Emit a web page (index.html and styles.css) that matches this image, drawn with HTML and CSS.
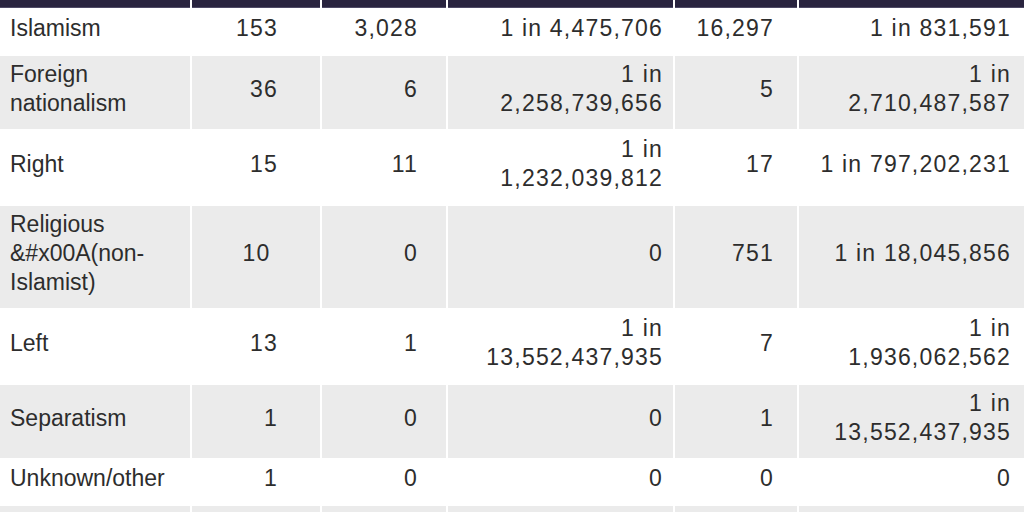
FILE: index.html
```html
<!DOCTYPE html>
<html lang="en">
<head>
<meta charset="utf-8">
<title>Terrorism deaths by ideology</title>
<link rel="stylesheet" href="styles.css">
</head>
<body>
<table class="data">
  <colgroup>
    <col class="w1"><col class="w2"><col class="w3"><col class="w4"><col class="w5"><col class="w6">
  </colgroup>
  <thead>
    <tr class="head"><th></th><th></th><th></th><th></th><th></th><th></th></tr>
  </thead>
  <tbody>
    <tr>
      <td class="c1">Islamism</td><td class="c2">153</td><td class="c3">3,028</td><td class="c4">1 in 4,475,706</td><td class="c5">16,297</td><td class="c6">1 in 831,591</td>
    </tr>
    <tr class="alt">
      <td class="c1">Foreign nationalism</td><td class="c2">36</td><td class="c3">6</td><td class="c4">1 in 2,258,739,656</td><td class="c5">5</td><td class="c6">1 in 2,710,487,587</td>
    </tr>
    <tr>
      <td class="c1">Right</td><td class="c2">15</td><td class="c3">11</td><td class="c4">1 in 1,232,039,812</td><td class="c5">17</td><td class="c6">1 in 797,202,231</td>
    </tr>
    <tr class="alt">
      <td class="c1">Religious &amp;#x00A(non-Islamist)</td><td class="c2">10&nbsp;</td><td class="c3">0</td><td class="c4">0</td><td class="c5">751</td><td class="c6">1 in 18,045,856</td>
    </tr>
    <tr>
      <td class="c1">Left</td><td class="c2">13</td><td class="c3">1</td><td class="c4">1 in 13,552,437,935</td><td class="c5">7</td><td class="c6">1 in 1,936,062,562</td>
    </tr>
    <tr class="alt">
      <td class="c1">Separatism</td><td class="c2">1</td><td class="c3">0</td><td class="c4">0</td><td class="c5">1</td><td class="c6">1 in 13,552,437,935</td>
    </tr>
    <tr>
      <td class="c1">Unknown/other</td><td class="c2">1</td><td class="c3">0</td><td class="c4">0</td><td class="c5">0</td><td class="c6">0</td>
    </tr>
    <tr class="alt">
      <td class="c1"></td><td class="c2"></td><td class="c3"></td><td class="c4"></td><td class="c5"></td><td class="c6"></td>
    </tr>
  </tbody>
</table>
</body>
</html>
```

FILE: styles.css
```css
html, body {
  margin: 0;
  padding: 0;
  overflow: hidden;
  background: #ffffff;
}

.data {
  margin: -2px 0 0 -2px;
  border-collapse: separate;
  border-spacing: 2px;
  table-layout: fixed;
  width: 1028px;
  font-family: "Liberation Sans", Arial, sans-serif;
  font-size: 23px;
  line-height: 29px;
  color: #2d2d2d;
}

.w1 { width: 190px; }
.w2 { width: 128px; }
.w3 { width: 124px; }
.w4 { width: 225px; }
.w5 { width: 122px; }
.w6 { width: 225px; }

.head th {
  height: 8px;
  padding: 0;
  background: #29243f;
  box-shadow: inset 0 -1px 0 #4e4a66;
}

.data td {
  padding: 4px 10px 11px 10px;
  vertical-align: middle;
  background: #ffffff;
}

.data tr.alt td {
  background: #ebebeb;
}

.data td.c1 {
  text-align: left;
}

.data td.c2, .data td.c3, .data td.c4, .data td.c5, .data td.c6 {
  text-align: right;
  letter-spacing: 1.2px;
}

.data td.c2 { padding-right: 42px; }
.data td.c3 { padding-right: 28px; }
.data td.c4 { padding-right: 10px; }
.data td.c5 { padding-right: 23px; }
.data td.c6 { padding-right: 13px; }
```
